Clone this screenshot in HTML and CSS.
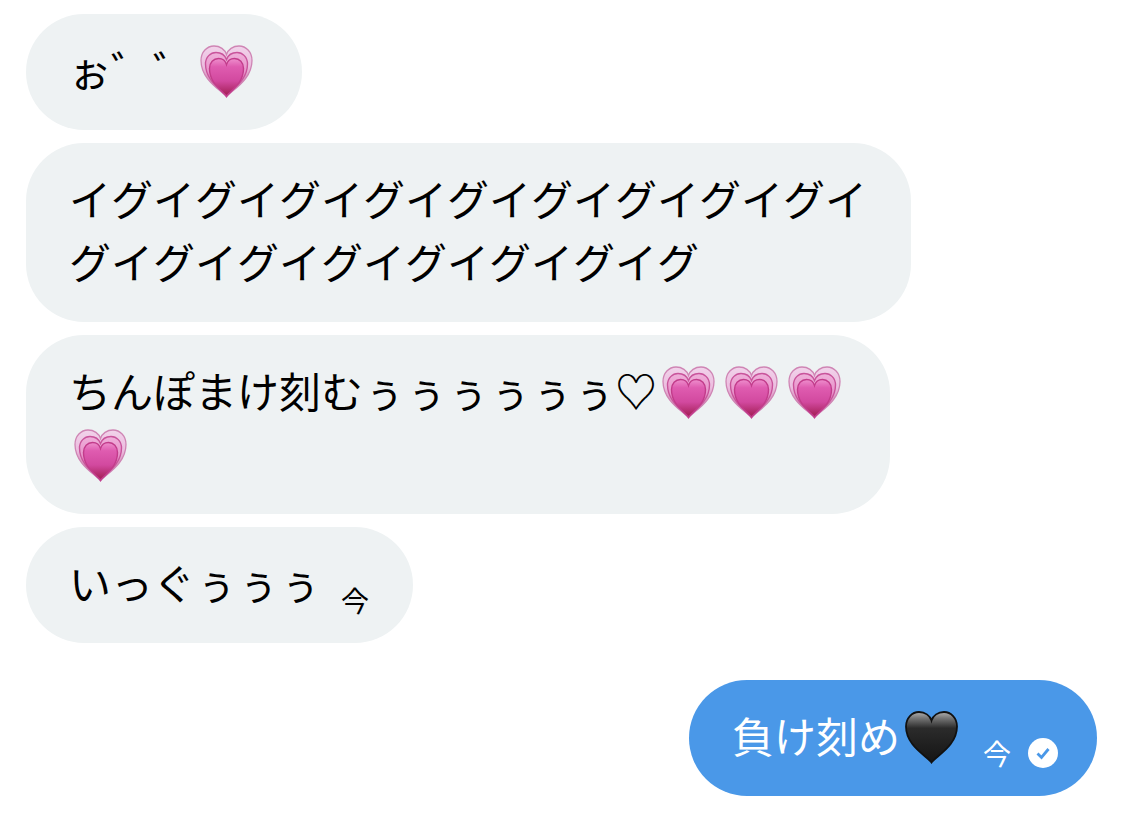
FILE: index.html
```html
<!DOCTYPE html>
<html lang="ja">
<head>
<meta charset="utf-8">
<meta name="viewport" content="width=device-width, initial-scale=1">
<title>メッセージ</title>
<link rel="stylesheet" href="styles.css">
</head>
<body>
<svg class="defs" aria-hidden="true">
  <defs>
    <linearGradient id="outer" x1="0" y1="0" x2="0" y2="1">
      <stop offset="0" stop-color="#f1d3ea"/><stop offset=".4" stop-color="#ecbcdf"/><stop offset="1" stop-color="#c25a92"/>
    </linearGradient>
    <linearGradient id="middle" x1="0" y1="0" x2="0" y2="1">
      <stop offset="0" stop-color="#efb0da"/><stop offset=".5" stop-color="#e78ec8"/><stop offset="1" stop-color="#b93a78"/>
    </linearGradient>
    <linearGradient id="inner" x1="0" y1="0" x2="0" y2="1">
      <stop offset="0" stop-color="#ee8fcd"/><stop offset=".22" stop-color="#df5cb0"/><stop offset=".6" stop-color="#d2499f"/><stop offset="1" stop-color="#a01c50"/>
    </linearGradient>
    <linearGradient id="dark" x1="0" y1="0" x2="0" y2="1">
      <stop offset="0" stop-color="#b0b0b0"/><stop offset=".12" stop-color="#777"/><stop offset=".32" stop-color="#2b2b2b"/><stop offset=".7" stop-color="#1e1e1e"/><stop offset="1" stop-color="#151515"/>
    </linearGradient>
    <symbol id="pink-heart" viewBox="0 0 53 53">
      <path fill="url(#outer)" stroke="#cf85b4" stroke-width="1.3" d="M26.500 52C23 46 1 36 1 15.500C1 7 7 1 14 1C20 1 25 4.500 26.500 9.500C28 4.500 33 1 39 1C46 1 52 7 52 15.500C52 36 30 46 26.500 52Z"/>
      <path fill="url(#middle)" stroke="#c9549b" stroke-width="1.400" d="M26.500 51.500C22 45 5.500 36 5.500 19C5.500 12 10.500 7.500 16 7.500C21 7.500 25 10.500 26.500 14.500C28 10.500 32 7.500 37 7.500C42.500 7.500 47.500 12 47.500 19C47.500 36 31 45 26.500 51.500Z"/>
      <path fill="url(#inner)" stroke="#c23c8b" stroke-width="1.400" d="M26.500 51C21 44.500 9.500 38 9.500 23.500C9.500 17.500 13.500 13.500 18.500 13.500C22.500 13.500 25.500 16 26.500 19.500C27.500 16 30.500 13.500 34.500 13.500C39.500 13.500 43.500 17.500 43.500 23.500C43.500 38 32 44.500 26.500 51Z"/>
    </symbol>
    <symbol id="black-heart" viewBox="0 0 53 53">
      <path fill="url(#dark)" stroke="#111" stroke-width="1.8" d="M26.500 51.500C22 45 1 35 1 15.500C1 7 7 1 14 1C20 1 25 4.500 26.500 9.500C28 4.500 33 1 39 1C46 1 52 7 52 15.500C52 35 31 45 26.500 51.500Z"/>
    </symbol>
  </defs>
</svg>
<main class="chat">
  <div class="bubble">
    <p class="text">ぉ゛゛<svg class="emoji" role="img" aria-label="ハート"><use href="#pink-heart"/></svg></p>
  </div>
  <div class="bubble">
    <p class="text">イグイグイグイグイグイグイグイグイグイ<br>グイグイグイグイグイグイグイグ</p>
  </div>
  <div class="bubble">
    <p class="text">ちんぽまけ刻むぅぅぅぅぅぅ<span class="symbol">♡</span><svg class="emoji" role="img" aria-label="ハート"><use href="#pink-heart"/></svg><svg class="emoji" role="img" aria-label="ハート"><use href="#pink-heart"/></svg><svg class="emoji" role="img" aria-label="ハート"><use href="#pink-heart"/></svg><br><svg class="emoji" role="img" aria-label="ハート"><use href="#pink-heart"/></svg></p>
  </div>
  <div class="bubble">
    <p class="text">いっぐぅぅぅ</p>
    <div class="meta"><time>今</time></div>
  </div>
  <div class="bubble sent">
    <p class="text">負け刻め<svg class="emoji" role="img" aria-label="黒いハート"><use href="#black-heart"/></svg></p>
    <div class="meta">
      <time>今</time>
      <svg class="check" viewBox="0 0 30 30" role="img" aria-label="送信済み"><circle cx="15" cy="15" r="15" fill="#fff"/><path d="M9.500 15.500L13.500 19.500L20.500 11" fill="none" stroke="#4a98e8" stroke-width="2.800"/></svg>
    </div>
  </div>
</main>
</body>
</html>
```
FILE: styles.css
```css
* { box-sizing: border-box; }

body {
  margin: 0;
  background: #fff;
  color: #000;
  font-family: "Noto Sans CJK JP", sans-serif;
  font-kerning: none;
}

.defs {
  position: absolute;
  width: 0;
  height: 0;
}

.chat {
  display: flex;
  flex-direction: column;
  align-items: flex-start;
  gap: 13px;
  padding: 14px 26px;
}

.bubble {
  display: flex;
  align-items: flex-end;
  gap: 20px;
  padding: 23px 44px 27px 43px;
  border-radius: 58px;
  background: #eef2f3;
}

.sent {
  align-self: flex-end;
  margin-top: 24px;
  padding-right: 39px;
  background: #4a98e8;
  color: #fff;
}

.text {
  margin: 0;
  padding-bottom: 3px;
  font-size: 42px;
  line-height: 63px;
}

.symbol {
  font-weight: 700;
}

.emoji {
  width: 53px;
  height: 53px;
  margin: 0 5px;
  vertical-align: -11px;
}

.meta {
  display: flex;
  align-items: center;
  gap: 17px;
  font-size: 28px;
  line-height: 32px;
}

.check {
  width: 30px;
  height: 30px;
}
```
